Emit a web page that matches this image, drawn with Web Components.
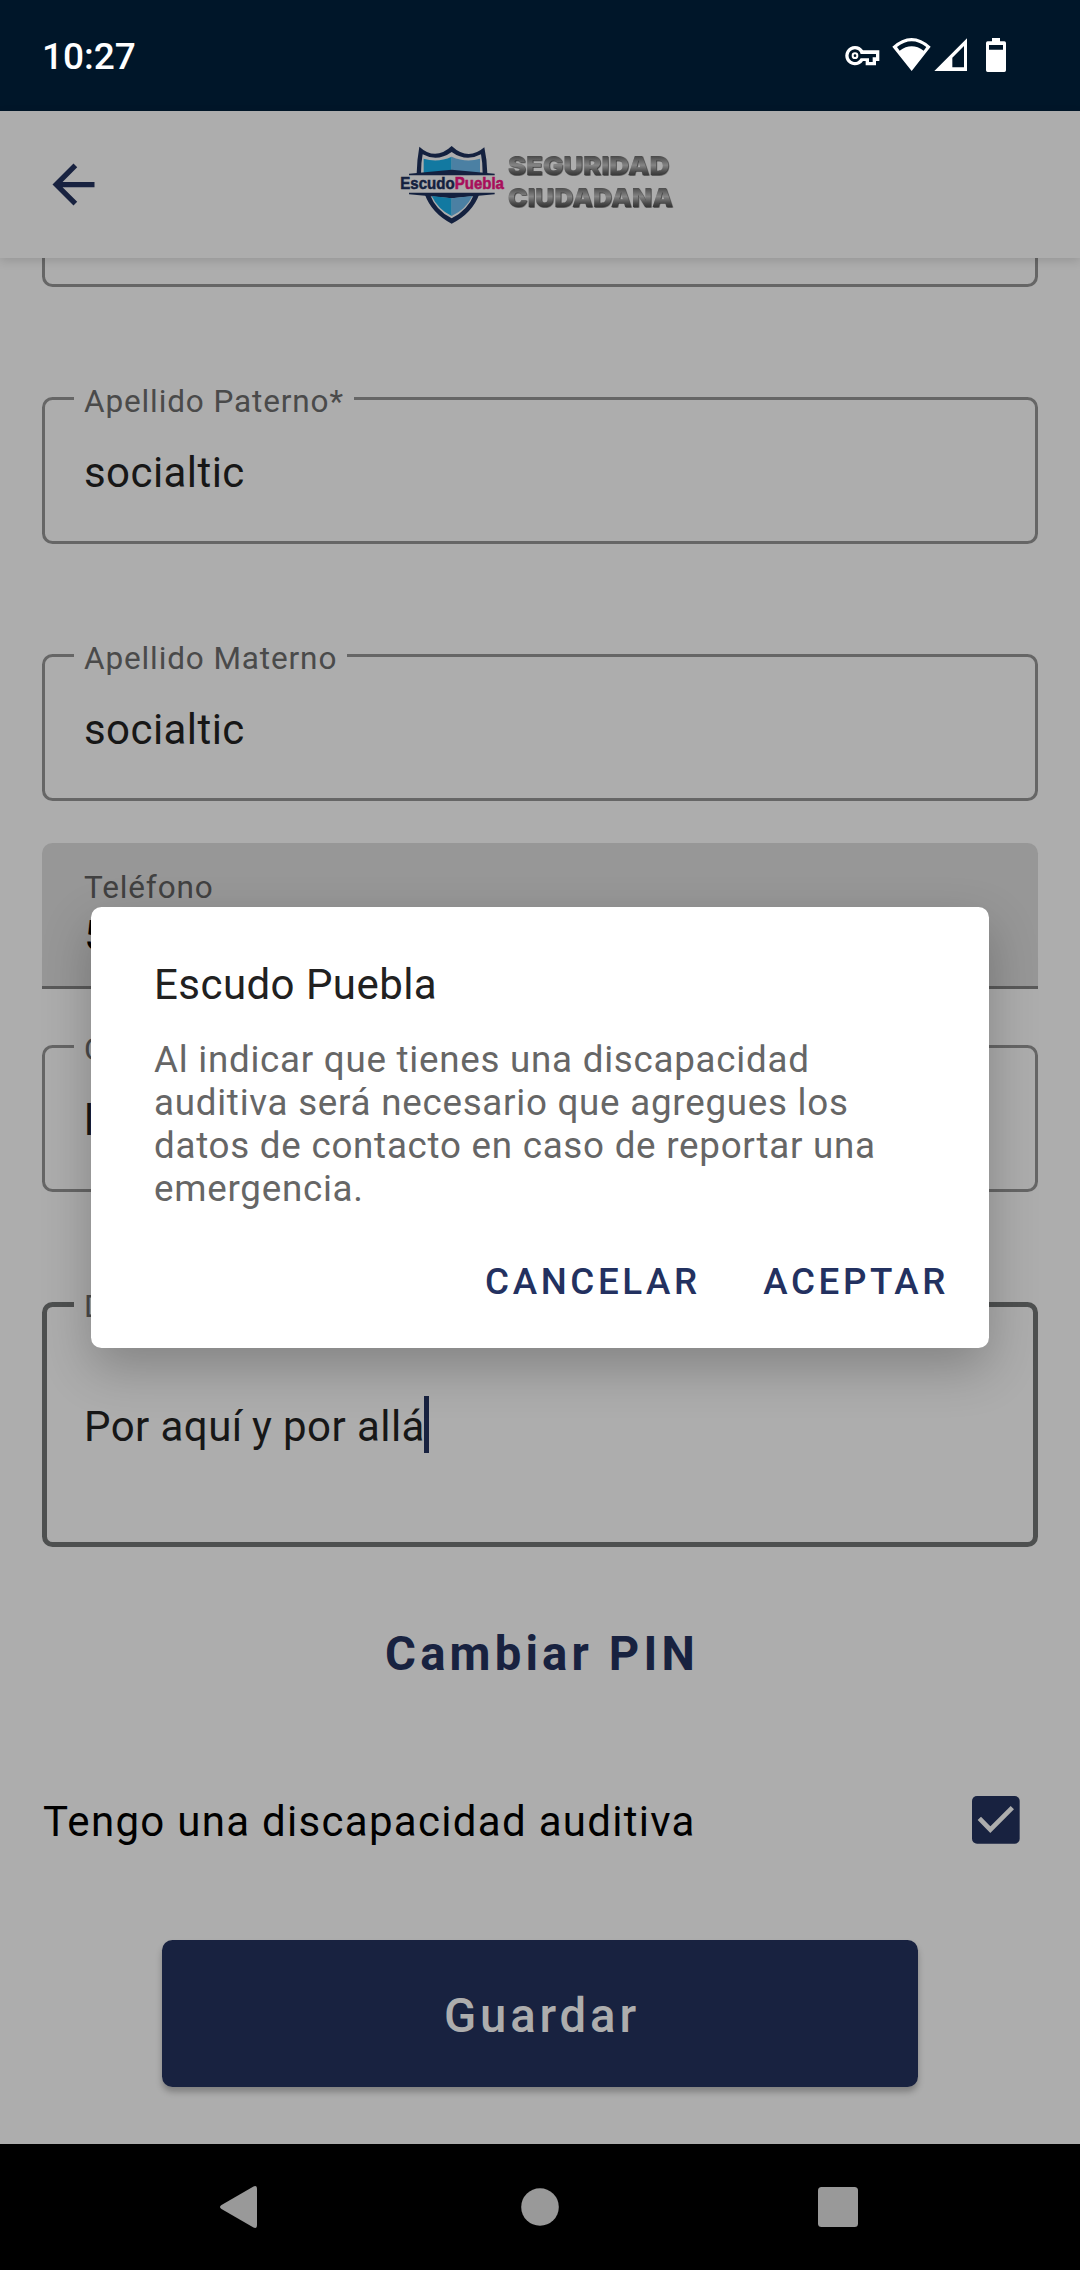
<!DOCTYPE html>
<html lang="es">
<head>
<meta charset="utf-8">
<title>Escudo Puebla</title>
<style>
html,body{margin:0;padding:0}
body{width:1080px;height:2270px;overflow:hidden;background:#adadad;font-family:Roboto,"Liberation Sans",sans-serif}
</style>
</head>
<body>
<escudo-screen></escudo-screen>
<script>
const define=(name,html)=>customElements.define(name,class extends HTMLElement{
  connectedCallback(){
    if(this.shadowRoot)return;
    const t=document.createElement('template');
    t.innerHTML=html;
    this.attachShadow({mode:'open'}).append(t.content.cloneNode(true));
  }
});

define('status-bar',`
<style>
:host{display:flex;align-items:center;justify-content:space-between;height:111px;flex:none;box-sizing:border-box;padding:0 70px 1px 42px;background:#001629;color:#fff}
time{font-size:37px;font-weight:500;line-height:44px;padding-top:3px}
svg{display:block;width:165px;height:40px}
</style>
<time>10:27</time>
<svg viewBox="75 105 495 120" fill="#fff">
<path fill-rule="evenodd" d="M105 138a29 29 0 0 1 24 13h49v32h-10v13h-31v-13h-8a29 29 0 1 1-24-45zM105 148a19 19 0 1 0 17 27h25v11h11v-14h10v-10h-46a19 19 0 0 0-17-14z"/>
<path fill-rule="evenodd" d="M105 157a10 10 0 1 1 0 20 10 10 0 0 1 0-20zM105 163a4 4 0 1 0 0 8 4 4 0 0 0 0-8z"/>
<path fill-rule="evenodd" d="M217 140Q275 88 332 140L275 213zM231 141L239 152Q275 126 311 152L319 141Q275 106 231 141z"/>
<path fill-rule="evenodd" d="M441 115V213H343zM432 138L397 173V202H432z"/>
<path fill-rule="evenodd" d="M516 114h24v10h13q5 0 5 5v82q0 5-5 5h-50q-5 0-5-5v-82q0-5 5-5h13zM507 135v14h42v-14z"/>
</svg>`);

define('brand-logo',`
<style>:host{display:block}svg{display:block;width:276px;height:110px}.metal{filter:drop-shadow(2px 2px 0 #303030)}</style>
<svg viewBox="60 0 828 330">
<defs>
<linearGradient id="s" x1="0" y1="0" x2="0" y2="1"><stop offset=".2" stop-color="#4c4c4c"/><stop offset=".48" stop-color="#858585"/><stop offset=".7" stop-color="#4a4a4a"/><stop offset=".8" stop-color="#383838"/></linearGradient>
</defs>
<path d="M110 131Q111 88 118 50Q166 94 215 48Q264 94 313 52Q321 88 322 131H308Q308 98 303 73Q258 97 215 66Q172 97 128 73Q123 98 123 131z" fill="#14213f"/>
<path d="M131 86Q174 99 215 80V122L131 130z" fill="#1279a1"/>
<path d="M215 80Q258 99 300 86V130L215 122z" fill="#4b80a3"/>
<path d="M87 131L215 119L344 131V136H87z" fill="#14213f"/>
<path d="M87 188H344V193L215 205L87 193z" fill="#14213f"/>
<path d="M134 192H149Q168 242 215 265Q262 242 283 192H298Q277 250 215 281Q155 250 134 192z" fill="#14213f"/>
<path d="M155 198L215 205V258Q174 238 155 198z" fill="#1279a1"/>
<path d="M277 198L215 205V258Q258 238 277 198z" fill="#4b80a3"/>
<text x="61" y="178" textLength="311" lengthAdjust="spacingAndGlyphs" font-weight="700" font-size="49" font-family="'Liberation Sans',Arial,sans-serif" stroke-width="1.6" fill="#14213f" stroke="#14213f">Escudo<tspan fill="#a80e5b" stroke="#a80e5b">Puebla</tspan></text>
<g class="metal" font-weight="900" font-size="78" font-family="Inter,'Liberation Sans',sans-serif" fill="url(#s)"><text x="383" y="136" textLength="485" lengthAdjust="spacingAndGlyphs">SEGURIDAD</text><text x="383" y="230" textLength="496" lengthAdjust="spacingAndGlyphs">CIUDADANA</text></g>
</svg>`);

define('app-bar',`
<style>
:host{display:flex;align-items:center;gap:295px;height:147px;flex:none;box-sizing:border-box;padding-left:42px;background:#adadad;position:relative;z-index:1;box-shadow:0 3px 9px rgba(0,0,0,.13)}
svg{display:block;width:63px;height:63px}
</style>
<svg viewBox="0 0 24 24" fill="#182240"><path d="M20 11H7.83l5.59-5.59L12 4l-8 8 8 8 1.41-1.41L7.83 13H20v-2z"/></svg>
<slot></slot>`);

define('outlined-field',`
<style>
:host{display:block;position:relative;box-sizing:border-box;height:147px;border:3px solid #666;border-radius:10.5px;padding:48px 39px 0;font-size:42px;line-height:49px;letter-spacing:.43px;color:#171717}
:host([multiline]){height:245px;border:5px solid #4e5050;padding:95px 37px 0}
.label{position:absolute;left:29px;top:-17px;padding:0 10px;background:#adadad;font-size:31.5px;line-height:37px;letter-spacing:.88px;color:#4a4a4a;white-space:nowrap}
:host([multiline]) .label{left:27px;top:-19px}
.row{display:flex;align-items:center;height:49px}
</style>
<div class="label"><slot name="label"></slot></div>
<div class="row"><slot></slot></div>`);

define('text-caret',`<style>:host{display:block;width:5px;height:57px;margin:-4px 0 0 -1px;background:#182240}</style>`);

define('filled-field',`
<style>
:host{display:block;box-sizing:border-box;height:146px;border-bottom:3px solid #5a5a5a;border-radius:10.5px 10.5px 0 0;background:#979797;padding:26px 42px 0}
.label{font-size:31.5px;line-height:37px;letter-spacing:.88px;color:#414141}
.value{margin-top:5px;font-size:42px;line-height:49px;letter-spacing:.43px;color:#000}
</style>
<div class="label"><slot name="label"></slot></div>
<div class="value"><slot></slot></div>`);

define('text-action',`
<style>:host{display:block;text-align:center;padding-left:4px;font-size:47.25px;line-height:55px;font-weight:700;letter-spacing:4.15px;color:#182240}</style>
<slot></slot>`);

define('check-row',`
<style>
:host{display:flex;align-items:center;justify-content:space-between;height:48px;padding:0 18px 0 1px;font-size:42px;line-height:49px;letter-spacing:1.3px;color:#000}
span{padding-top:2px}
svg{display:block;width:48px;height:48px}
</style>
<span><slot></slot></span>
<svg viewBox="0 0 144 144"><rect width="143" height="143" rx="15" fill="#182240"/><path d="M22 67L55 101L121 35" fill="none" stroke="#adadad" stroke-width="14"/></svg>`);

define('primary-button',`
<style>:host{display:flex;align-items:center;justify-content:center;height:147px;box-sizing:border-box;padding:5px 0 0 4px;border-radius:10.5px;background:#182240;color:#adadad;font-size:47.25px;font-weight:500;letter-spacing:3.85px;line-height:55px;box-shadow:0 5px 6px rgba(0,0,0,.26)}</style>
<slot></slot>`);

define('form-view',`
<style>
:host{display:flex;flex-direction:column;flex:1;min-height:0;box-sizing:border-box;padding:0 42px;overflow:hidden}
.f1{margin-top:-118px;flex:none}.g110{margin-top:110px}.g42{margin-top:42px}.g55{margin-top:56px}
.y{margin-left:-1.5px}
.pin{margin-top:80px}.chk{margin-top:114px}.save{margin:96px 120px 0}
</style>
<outlined-field class="f1"></outlined-field>
<outlined-field class="g110"><span slot="label">Apellido Paterno*</span>socialtic</outlined-field>
<outlined-field class="g110"><span slot="label">Apellido Materno</span>socialtic</outlined-field>
<filled-field class="g42"><span slot="label">Teléfono</span>5</filled-field>
<outlined-field class="g55"><span slot="label">C</span>l</outlined-field>
<outlined-field class="g110" multiline><span slot="label">D</span><span>Por aquí <span class="y">y</span> por allá</span><text-caret></text-caret></outlined-field>
<text-action class="pin">Cambiar PIN</text-action>
<check-row class="chk">Tengo una discapacidad auditiva</check-row>
<primary-button class="save">Guardar</primary-button>`);

define('nav-bar',`
<style>:host{display:flex;align-items:center;justify-content:space-between;height:126px;flex:none;box-sizing:border-box;padding:0 220px;background:#000}svg{display:block;width:44px;height:44px}:host{padding:0 218px}</style>
<svg viewBox="-2 0 44 44" fill="#999"><path d="M1.5 20L33.5 1.5Q37 0 37 4V40Q37 44 33.5 42.5L1.5 24Q-1.500 22 1.500 20z"/></svg>
<svg viewBox="-2 0 44 44" fill="#999"><circle cx="20" cy="22" r="18.800"/></svg>
<svg viewBox="-2 0 44 44" fill="#999"><rect y="2" x="-2" width="40" height="40" rx="3.500"/></svg>`);

define('alert-dialog',`
<style>
:host{display:flex;flex-direction:column;position:absolute;left:91px;top:907px;width:898px;height:441px;box-sizing:border-box;padding:53px 40px 0 63px;background:#fff;border-radius:10.5px;box-shadow:0 20px 50px rgba(0,0,0,.24)}
.title{font-size:42px;line-height:49px;letter-spacing:.45px;color:#212121}
.body{margin-top:29px;font-size:36.75px;line-height:43px;letter-spacing:.74px;color:#666;white-space:nowrap}
.actions{display:flex;justify-content:flex-end;gap:62.5px;margin-top:50px;font-size:36.75px;line-height:43px;font-weight:500;letter-spacing:3.6px;color:#233160}
</style>
<div class="title"><slot name="title"></slot></div>
<div class="body"><slot></slot></div>
<div class="actions"><slot name="action"></slot></div>`);

define('escudo-screen',`
<style>:host{display:flex;flex-direction:column;position:relative;width:1080px;height:2270px;background:#adadad}</style>
<status-bar></status-bar>
<app-bar><brand-logo></brand-logo></app-bar>
<form-view></form-view>
<nav-bar></nav-bar>
<alert-dialog>
<span slot="title">Escudo Puebla</span>
Al indicar que tienes una discapacidad<br>auditiva será necesario que agregues los<br>datos de contacto en caso de reportar una<br>emergencia.
<span slot="action">CANCELAR</span><span slot="action">ACEPTAR</span>
</alert-dialog>`);
</script>
</body>
</html>
